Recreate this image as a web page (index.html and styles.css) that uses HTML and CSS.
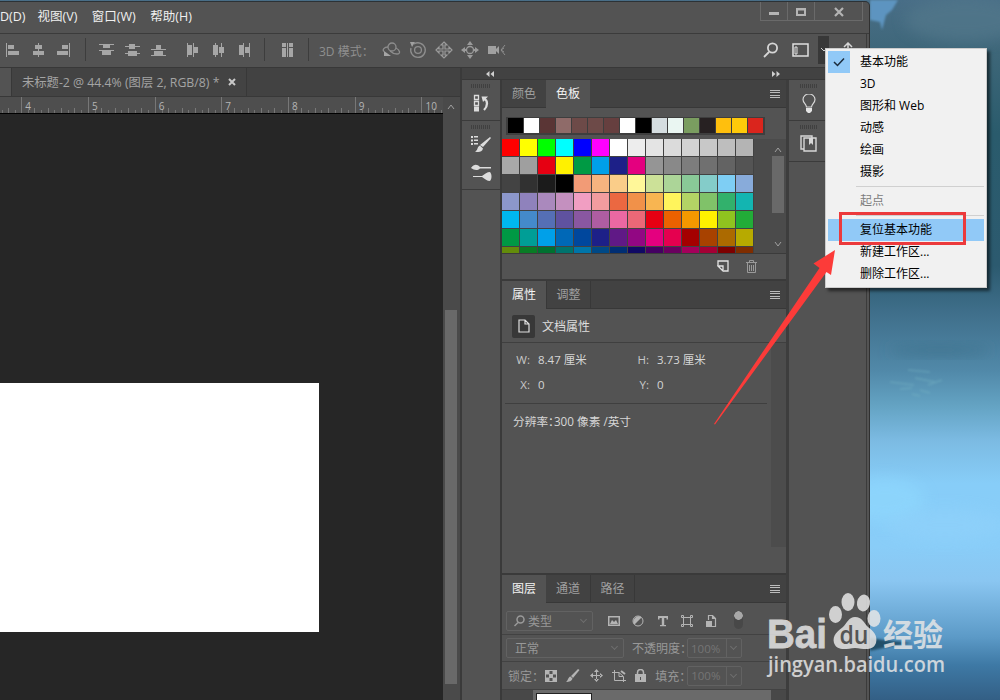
FILE: index.html
```html
<!DOCTYPE html>
<html lang="zh-CN">
<head>
    <meta charset="UTF-8">
    <meta name="viewport" content="width=device-width, initial-scale=1.0">
    <title>未标题-2</title>
    <link rel="stylesheet" href="styles.css">
</head>
<body>
<div class="desktop">
    <svg class="wallpaper" width="130" height="700">
        <defs>
            <filter id="soft" x="-50%" y="-50%" width="200%" height="200%"><feGaussianBlur stdDeviation="7"/></filter>
            <filter id="slight" x="-50%" y="-50%" width="200%" height="200%"><feGaussianBlur stdDeviation="1"/></filter>
        </defs>
        <path d="M0 0H28L22 10 16 15 12 30 10 22 0 20Z" fill="#5d94c0" filter="url(#slight)"/>
        <ellipse cx="95" cy="20" rx="60" ry="22" fill="#53788b" filter="url(#soft)" opacity=".7"/>
        <ellipse cx="70" cy="350" rx="50" ry="5" fill="#3f7590" filter="url(#soft)"/>
        <g stroke="#79b6c4" stroke-width="1.5" opacity=".45" filter="url(#slight)">
            <path d="M38 370l22 2M20 382l24 3M45 378l20 4M50 390l10 3M30 389l12-1M58 385l14-5M42 394l8 2"/>
        </g>
        <ellipse cx="15" cy="500" rx="40" ry="22" fill="#91dbff" filter="url(#soft)" opacity=".5"/>
        <ellipse cx="75" cy="525" rx="60" ry="16" fill="#90d2fb" filter="url(#soft)" opacity=".6"/>
        <path d="M0 638l14 2 28 3-20 3-22 5Z" fill="#245069" filter="url(#slight)"/>
    </svg>

    <div class="window">
        <div class="menubar">
            <span class="menu-item">D(D)</span>
            <span class="menu-item">视图(V)</span>
            <span class="menu-item">窗口(W)</span>
            <span class="menu-item">帮助(H)</span>
            <div class="window-buttons">
                <span><svg width="12" height="10"><path d="M1 5h10v3H1z"/></svg></span>
                <span><svg width="12" height="10"><path d="M1 1h10v8H1zM3 3.500v3.500h6V3.500z" fill-rule="evenodd"/></svg></span>
                <span class="close"><svg width="12" height="10"><path d="M2 1l8 8M10 1L2 9" stroke="#b4b4b4" stroke-width="2.2"/></svg></span>
            </div>
        </div>

        <div class="options">
            <div class="tool-group">
                <svg width="16" height="16"><path d="M1 1h1v14H1zM3 3h6v4H3zM3 9h11v4H3z"/></svg>
                <svg width="16" height="16"><path d="M7 1h1v14H7zM4 3h7v4H4zM2 9h11v4H2z"/></svg>
                <svg width="16" height="16"><path d="M12 1h1v14h-1zM5 3h6v4H5zM0 9h11v4H0z"/></svg>
            </div>
            <i class="sep"></i>
            <div class="tool-group">
                <svg width="16" height="16"><path d="M1 2h15v1H1zM1 8h15v1H1zM5 3h7v3H5zM4 9h9v4H4z"/></svg>
                <svg width="16" height="16"><path d="M1 4h15v1H1zM1 11h15v1H1zM5 2h6v5H5zM4 9h9v5H4z"/></svg>
                <svg width="16" height="16"><path d="M1 7h15v1H1zM1 13h15v1H1zM6 3h5v4H6zM4 9h9v4H4z"/></svg>
            </div>
            <div class="tool-group second">
                <svg width="16" height="16"><path d="M3 1h1v14H3zM9 1h1v14H9zM4 3h4v10H4zM10 5h4v6h-4z"/></svg>
                <svg width="16" height="16"><path d="M5 1h1v14H5zM11 1h1v14h-1zM3 3h5v10H3zM9 5h5v6H9z"/></svg>
                <svg width="16" height="16"><path d="M7 1h1v14H7zM13 1h1v14h-1zM3 3h4v10H3zM9 5h4v6H9z"/></svg>
            </div>
            <i class="sep"></i>
            <svg class="distribute" width="16" height="16"><path d="M3 1h4v4H3zM3 6h4v9H3zM8 1h1v14H8zM10 1h4v4h-4zM10 6h4v9h-4z"/></svg>
            <i class="sep"></i>
            <span class="mode-label">3D 模式：</span>
            <div class="tool-group mode">
                <svg width="20" height="16" fill="none" stroke="#8d8d8d" stroke-width="1.3"><circle cx="11" cy="5" r="4"/><path d="M7 5C3 5 1 8 3 9.500M15 6c4 2 5 6 1 6-3 0-5-1-7-3"/><path d="M3 9l7 5H3z" fill="#a5a5a5" stroke="none"/></svg>
                <svg width="18" height="18" fill="none" stroke="#8d8d8d" stroke-width="1.3"><circle cx="9" cy="9" r="3.4"/><path d="M5 3a7.300 7.300 0 1 1-3 4"/><path d="M1 1h5L3 6z" fill="#a0a0a0" stroke="none"/></svg>
                <svg width="18" height="18" fill="none" stroke="#9b9b9b" stroke-width="1.2"><path d="M9 1l3 3h-2v4h4V6l3 3-3 3v-2h-4v4h2l-3 3-3-3h2v-4H4v2L1 9l3-3v2h4V4H6z"/></svg>
                <svg width="18" height="18" fill="#9b9b9b"><circle cx="9" cy="9" r="3.500" fill="none" stroke="#9b9b9b" stroke-width="1.300"/><path d="M9 0l3 4H6zM9 18l3-4H6zM0 9l4-3v2h2v2H4v2zM18 9l-4-3v2h-2v2h2v2z"/></svg>
                <svg width="20" height="16" fill="#a0a0a0"><path d="M1 4h8v8H1zM8 8l4-4v8z"/><path d="M18 3l-4 5 4 5M17 6l-3 2 3 2" fill="none" stroke="#8d8d8d"/></svg>
            </div>
            <div class="right-tools">
                <svg width="16" height="16" fill="none" stroke="#d6d6d6" stroke-width="1.800"><circle cx="9.500" cy="6" r="4.600"/><path d="M6 10l-5 5"/></svg>
                <svg width="17" height="14" fill="none" stroke="#e0e0e0" stroke-width="1.500"><path d="M1 1h15v12H1z"/><path d="M3 4h2v7H3z" stroke-width="1"/></svg>
                <span class="workspace-btn"><svg width="8" height="6" fill="none" stroke="#d0d0d0"><path d="M1 1l3 3 3-3"/></svg></span>
                <svg class="share" width="16" height="16" fill="none" stroke="#d6d6d6" stroke-width="1.500"><path d="M8 1v11M4 5l4-4 4 4M1 7h4M11 7h4"/></svg>
            </div>
        </div>

        <div class="main">
            <div class="document">
                <div class="doc-tabs">
                    <div class="doc-tab-prev"></div>
                    <div class="doc-tab">未标题-2 @ 44.4% (图层 2, RGB/8) *<svg width="8" height="8"><path d="M1 1l6 6M7 1L1 7" stroke="#c8c8c8" stroke-width="2"/></svg></div>
                </div>
                <div class="doc-body">
                    <div class="canvas-side">
                        <div class="ruler"><b></b><b>4</b><b>5</b><b>6</b><b>7</b><b>8</b><b>9</b><b>10</b></div>
                        <div class="canvas"><div class="artboard"></div></div>
                    </div>
                    <div class="doc-scroll">
                        <svg width="8" height="6" fill="none" stroke="#a0a0a0"><path d="M1 5l3-4 3 4"/></svg>
                        <div class="doc-thumb"></div>
                    </div>
                </div>
            </div>

            <div class="dock">
                <div class="dock-head">
                    <svg width="8" height="6" fill="#cfcfcf"><path d="M3.500 0v6L0 3zM8 0v6L4.500 3z"/></svg>
                    <svg width="8" height="6" fill="#cfcfcf"><path d="M0 0v6l3.500-3zM4.500 0v6L8 3z"/></svg>
                </div>
                <div class="dock-cols">
                    <div class="icon-col">
                        <div class="icon-group">
                            <i class="grip"></i>
                            <svg width="16" height="18" fill="none" stroke="#dcdcdc" stroke-width="1.300"><path d="M1.500 1.500h4v4h-4zM1.500 7.500h4v4h-4z"/><path d="M1 12.500h5v5H1z" fill="#dcdcdc" stroke="none"/><path d="M11 5c4 1 4 7 0 11" stroke-width="2.300"/><path d="M8.500 2.500H15L10 8z" fill="#dcdcdc" stroke="none"/></svg>
                        </div>
                        <div class="icon-group tall">
                            <i class="grip"></i>
                            <svg width="22" height="19" fill="#dcdcdc"><path d="M1 1h2v2H1zM4 1h4v1.500H4zM1 4.500h2v2H1zM4 4.500h4V6H4zM1 8h2v2H1zM4 8h4v1.500H4z"/><path d="M20 2l1 1-8 9-3-2zM10 10.500l3 3c-1 4-5 4-8 3 3-1 2-5 5-6z"/></svg>
                            <svg class="second-icon" width="22" height="18" fill="#dcdcdc"><path d="M1 4c3-4 6-4 9-1h11v1.500H10C7 7 4 6 1 4zM3 12h9c3-2 5-4 8-4 2 2 2 7 0 9-3 0-5-2-8-4H3z"/></svg>
                        </div>
                    </div>

                    <div class="panels">
                        <div class="panel swatches-panel">
                            <div class="tabs"><span>颜色</span><span class="active">色板</span><i class="flyout"></i></div>
                            <div class="recent" id="recent"></div>
                            <div class="swatch-area">
                                <div class="swatch-grid" id="swatches"></div>
                                <div class="swatch-scroll">
                                    <svg width="8" height="6" fill="none" stroke="#a0a0a0"><path d="M1 5l3-4 3 4"/></svg>
                                    <div class="swatch-thumb"></div>
                                    <svg width="8" height="6" fill="none" stroke="#a0a0a0"><path d="M1 1l3 4 3-4"/></svg>
                                </div>
                            </div>
                            <div class="panel-foot">
                                <svg width="12" height="12" fill="none" stroke="#e4e4e4" stroke-width="1.300"><path d="M1 5.500V1h10v10H6.500"/><path d="M1 6h5v5z"/></svg>
                                <svg width="11" height="13" fill="none" stroke="#9a9a9a"><path d="M0 2.500h11M3.500 2V.5h4V2M1.500 3v9.500h8V3M3.500 5v6M5.500 5v6M7.500 5v6"/></svg>
                            </div>
                        </div>

                        <div class="panel props-panel">
                            <div class="tabs"><span class="active">属性</span><span class="last">调整</span><i class="flyout"></i></div>
                            <div class="props-head">
                                <span class="doc-icon"><svg width="12" height="14" fill="none" stroke="#e0e0e0" stroke-width="1.200"><path d="M1 1h6l4 4v8H1zM7 1v4h4"/></svg></span>
                                文档属性
                            </div>
                            <div class="props-body">
                                <div class="props-grid">
                                    <label>W:</label><span>8.47 厘米</span><label>H:</label><span>3.73 厘米</span>
                                    <label>X:</label><span>0</span><label>Y:</label><span>0</span>
                                </div>
                                <div class="resolution">分辨率：300 像素 /英寸</div>
                            </div>
                        </div>

                        <div class="panel layers-panel">
                            <div class="tabs"><span class="active">图层</span><span>通道</span><span class="last">路径</span><i class="flyout"></i></div>
                            <div class="layer-row filter-row">
                                <div class="select kind">
                                    <svg width="11" height="12" fill="none" stroke="#9a9a9a" stroke-width="1.500"><circle cx="6.500" cy="4.500" r="3.500"/><path d="M4 7.500L.5 11"/></svg>
                                    类型
                                    <i class="caret"></i>
                                </div>
                                <div class="filter-icons">
                                    <svg width="12" height="12"><path d="M0 1h12v10H0zM1.500 2.500v7h9v-7z" fill-rule="evenodd"/><path d="M2 9l2-4 2 2 2-2 2 4z"/></svg>
                                    <svg width="12" height="12"><circle cx="6" cy="6" r="5" fill="none" stroke="#b4b4b4"/><path d="M9.500 2.500A5 5 0 0 0 2.500 9.500z"/></svg>
                                    <svg width="12" height="12"><path d="M1 1h10v3.500H9.500V3H7.200v7H9v1.200H3V10h1.800V3H2.500v1.500H1z"/></svg>
                                    <svg width="12" height="12" fill="none" stroke="#b4b4b4"><path d="M2.500 2.500h7v7h-7z"/><path d="M.5.5h2v2h-2zM9.500.5h2v2h-2zM.5 9.500h2v2h-2zM9.500 9.500h2v2h-2z"/></svg>
                                    <svg width="12" height="12"><path d="M3.500 5V.5h4l3 3v8H7M7.500.5v3h3" fill="none" stroke="#b4b4b4" stroke-width="1.200"/><path d="M1 6h6v6H1z"/></svg>
                                </div>
                                <i class="toggle"></i>
                            </div>
                            <div class="layer-row blend-row">
                                <div class="select blend">正常<i class="caret"></i></div>
                                <span class="row-label">不透明度：</span>
                                <div class="select percent">100%<i class="caret"></i></div>
                            </div>
                            <div class="layer-row lock-row">
                                <span class="row-label">锁定：</span>
                                <div class="lock-icons">
                                    <svg width="12" height="12"><path d="M0 0h12v12H0zM4.500 1v3h3V1zM1 4.500v3h3v-3zM8 4.500v3h3v-3zM4.500 8v3h3V8z" fill-rule="evenodd"/></svg>
                                    <svg width="14" height="13"><path d="M12 0l1.500 1L7 9 5 7zM4.500 7.500l2 2C6 12 3 13 0 13c2-1 2-5 4.500-5.500z"/></svg>
                                    <svg width="13" height="13"><path d="M6 2h1v9H6zM2 6h9v1H2zM6.500 0L9 3H4zM6.500 13L9 10H4zM0 6.500L3 4v5zM13 6.500L10 4v5z"/></svg>
                                    <svg width="14" height="12" fill="none" stroke="#b4b4b4"><path d="M2.500 0v10.500H14M0 2.500h7l4.500 4V12M7 2.500v4h4"/><path d="M9 1l4 3" stroke-width="2"/></svg>
                                    <svg width="11" height="13"><path d="M0 5h11v8H0z"/><path d="M2.500 5V3.500a3 3 0 0 1 6 0V5" fill="none" stroke="#b4b4b4" stroke-width="1.500"/><path d="M5 8h1v3H5z" fill="#535353"/></svg>
                                </div>
                                <span class="row-label fill-label">填充：</span>
                                <div class="select percent">100%<i class="caret"></i></div>
                            </div>
                            <div class="layer-list"><div class="layer"><div class="layer-thumb"></div></div></div>
                        </div>
                    </div>

                    <div class="side-col">
                        <div class="icon-group">
                            <i class="grip"></i>
                            <svg width="14" height="20"><path d="M4.500 13c0-3-3.500-4-3.500-7.500a6 5.500 0 0 1 12 0C13 9 9.500 10 9.500 13z" fill="none" stroke="#d8d8d8" stroke-width="1.200"/><path d="M4 14h6v3l-2 2H6l-2-2z" fill="#e4e4e4"/></svg>
                        </div>
                        <div class="icon-group">
                            <i class="grip"></i>
                            <svg width="17" height="17" fill="none" stroke="#d8d8d8" stroke-width="1.400"><path d="M4 3h12v13H4zM4 14H1V1h11v2"/><path d="M9 3h4v7l-2-2-2 2z" fill="#d8d8d8" stroke="none"/></svg>
                        </div>
                    </div>
                </div>
            </div>
        </div>
    </div>

    <!-- workspace menu -->
    <div class="popup">
        <div class="popup-item checked">基本功能</div>
        <div class="popup-item">3D</div>
        <div class="popup-item">图形和 Web</div>
        <div class="popup-item">动感</div>
        <div class="popup-item">绘画</div>
        <div class="popup-item">摄影</div>
        <hr>
        <div class="popup-item disabled">起点</div>
        <hr>
        <div class="popup-item hover">复位基本功能</div>
        <div class="popup-item">新建工作区...</div>
        <div class="popup-item">删除工作区...</div>
        <svg class="check" width="22" height="22" fill="none" stroke="#1c2c3c" stroke-width="1.500"><path d="M6 11l3.500 3.500L16 7.500"/></svg>
    </div>

    <!-- annotation -->
    <div class="red-box"></div>
    <svg class="arrow" width="130" height="185"><path d="M4 184L109.500 28 103.500 23.500 125 10 121 35 116.500 32 5 184.500Z" fill="#fc3b39"/></svg>

    <!-- watermark -->
    <svg class="watermark" width="190" height="92">
        <g fill="#e6e6e6" fill-opacity=".85">
            <text x="2" y="58" class="wm-bai" textLength="60" lengthAdjust="spacingAndGlyphs">Bai</text>
            <ellipse cx="70.500" cy="24.500" rx="6.500" ry="8.500"/>
            <ellipse cx="83" cy="12" rx="6.500" ry="9"/>
            <ellipse cx="98.500" cy="13" rx="6.500" ry="8.500" transform="rotate(10 98.500 13)"/>
            <ellipse cx="109" cy="28.500" rx="6.500" ry="8.500"/>
            <path d="M90 27c7 0 9 6 13 10 5 4 10 8 8 16-3 8-11 6-21 5-10 1-18 3-21-5-2-8 4-12 9-16 4-4 6-10 12-10z"/>
            <text x="118" y="56" class="wm-cn" textLength="60" lengthAdjust="spacingAndGlyphs">经验</text>
            <text x="3" y="82" class="wm-url" textLength="177" lengthAdjust="spacingAndGlyphs">jingyan.baidu.com</text>
        </g>
        <text x="74.500" y="54" class="wm-du" textLength="29" lengthAdjust="spacingAndGlyphs">du</text>
    </svg>
</div>

<script>
    const recent = ['000', 'fff', '5a3535', '8f6b69', '6d4a48', '6d4a48', '663f3f', 'fff', '000', 'd5dde0', 'eaf6f2', '7a9d60', '272122', 'ffbf0d', 'ffca0a', 'da251d'];

    const swatches = [
        'f00 ff0 0f0 0ff 00f f0f fff ededed e4e4e4 dbdbdb d2d2d2 c8c8c8 bebebe b4b4b4',
        'a9a9a9 9f9f9f e60012 fff100 009a44 00a0e9 1d2088 e4007f 959595 898989 7d7d7d 707070 636363 545454',
        '434343 313131 1b1b1b 000 f29b76 f6b37f facd89 fff799 cce198 acd598 89c997 84ccc9 7ecef4 88abda',
        '8c97cb 8f82bc aa89bd c490bf f19ec2 f29c9f eb6841 f19149 f8b551 fff45c b3d465 80c269 32b16c 13b5b1',
        '00b7ee 448aca 556fb5 5f52a0 8957a1 ae5da1 ea68a2 eb6877 e60012 eb6100 f39800 fff100 8fc31f 22ac38',
        '009944 009e96 00a0e9 0068b7 00479d 1d2088 601986 920783 e4007f e5004f a40000 a84200 ac6a00 b7aa00',
        '638c0b 097c25 007130 00736d 0075a9 004986 002e73 100964 440062 6a005f a4005b a40035 7d0000 7f2d00'
    ].join(' ').split(' ');

    function fill(id, colors) {
        document.getElementById(id).innerHTML = colors.map(c => `<i style="background:#${c}"></i>`).join('');
    }

    fill('recent', recent);
    fill('swatches', swatches);
</script>
</body>
</html>
```

FILE: styles.css
```css
* {
    box-sizing: border-box;
}
body {
    margin: 0;
    font-family: "Open Sans", "Noto Sans CJK SC", sans-serif;
    font-size: 12px;
    color: #d6d6d6;
}
svg {
    display: block;
    flex: none;
}
.desktop {
    position: relative;
    width: 1000px;
    height: 700px;
    padding-top: 1px;
    overflow: hidden;
    background: linear-gradient(#496e87 0, #3d6678 8%, #2a5b6c 19%, #2c5a6f 38%, #40708c 45%, #5189a9 53%, #64a3c3 58%, #7cbbe3 63%, #87cdf8 69%, #89cdf8 78%, #8ac6f1 83%, #5c9ac7 91%, #3e79a5 95%, #335f85 100%);
}
.wallpaper {
    position: absolute;
    left: 870px;
    top: 0;
}

/* window */
.window {
    position: relative;
    display: flex;
    flex-direction: column;
    width: 870px;
    height: 699px;
    background: #535353;
    border-top: 1px solid #2c3236;
    border-right: 1px solid #303030;
    border-top-right-radius: 5px;
    overflow: hidden;
}
.menubar {
    display: flex;
    flex: none;
    height: 32px;
    border-bottom: 1px solid #3b3b3b;
    line-height: 29px;
    font-size: 12.500px;
    color: #f0f0f0;
}
.menu-item {
    margin-right: 14.500px;
    white-space: nowrap;
}
.menu-item:first-child {
    width: 23px;
}
.window-buttons {
    display: flex;
    height: 19px;
    margin: 0 6px 0 auto;
    border: 1px solid #6a6a6a;
    border-top: 0;
}
.window-buttons span {
    display: flex;
    align-items: center;
    justify-content: center;
    width: 27px;
    padding-top: 1px;
    border-right: 1px solid #6a6a6a;
}
.window-buttons svg {
    fill: #b4b4b4;
}
.window-buttons .close {
    width: 47px;
    border: 0;
}
.options {
    display: flex;
    flex: none;
    align-items: center;
    height: 34px;
    margin-right: 2px;
    padding: 0 0 2px 5px;
    border-right: 1px solid #3b3b3b;
    border-bottom: 1px solid #383838;
}
.options svg:not([fill]) {
    fill: #a6a6a6;
}
.tool-group {
    display: flex;
    align-items: center;
    gap: 10px;
}
.tool-group.second {
    margin-left: 18px;
}
.sep {
    width: 1px;
    height: 23px;
    margin: 0 12px;
    background: #3d3d3d;
}
.distribute {
    margin: 0 1px 0 2px;
}
.mode-label {
    width: 62px;
    margin-left: -2px;
    padding-top: 2px;
    color: #8f8f8f;
    white-space: nowrap;
}
.mode {
    gap: 8px;
}
.right-tools {
    display: flex;
    align-items: center;
    margin: 0 10px 0 auto;
}
.right-tools svg + svg {
    margin: 0 9px 0 13px;
}
.workspace-btn {
    display: flex;
    align-items: center;
    justify-content: center;
    width: 11px;
    height: 28px;
    background: #383838;
    margin-right: 11px;
}
.right-tools .share {
    margin: 0;
}
.main {
    display: flex;
    flex: 1;
    min-height: 0;
}

/* document */
.document {
    display: flex;
    flex-direction: column;
    width: 460px;
}
.doc-tabs {
    display: flex;
    flex: none;
    height: 29px;
    background: #424242;
    border-bottom: 1px solid #383838;
}
.doc-tab-prev {
    width: 12px;
    background: #535353;
    border-right: 1px solid #383838;
}
.doc-tab {
    display: flex;
    align-items: center;
    width: 235px;
    padding-left: 10px;
    border-right: 1px solid #383838;
    background: #434343;
    color: #a4a4a4;
    font-size: 12.3px;
    white-space: nowrap;
}
.doc-tab svg {
    margin-left: 9px;
}
.doc-body {
    display: flex;
    flex: 1;
}
.canvas-side {
    width: 443px;
    overflow: hidden;
}
.ruler {
    display: flex;
    height: 17px;
    padding-left: 21.300px;
    overflow: hidden;
    background: #4e4e4e;
    border-bottom: 1px solid #000;
}
.ruler b {
    flex: none;
    width: 66.700px;
    padding-left: 3px;
    border-left: 1px solid #777;
    font-weight: normal;
    font-size: 10px;
    line-height: 18px;
    color: #b5b5b5;
    background:
        repeating-linear-gradient(90deg, transparent 0 12.300px, #777 12.300px 13.340px) 0 100% / 100% 5px no-repeat,
        repeating-linear-gradient(90deg, transparent 0 5.670px, #727272 5.670px 6.670px) 0 100% / 100% 3px no-repeat;
}
.ruler b:first-child {
    margin-left: -66.700px;
}
.canvas {
    height: 586px;
    padding-top: 269px;
    background: #262626;
}
.artboard {
    width: 319px;
    height: 249px;
    background: #fff;
}
.doc-scroll {
    width: 17px;
    padding: 7px 3px 0 2px;
    background: #4a4a4a;
}
.doc-scroll svg {
    margin-left: 2px;
}
.doc-thumb {
    height: 374px;
    margin-top: 200px;
    background: #696969;
}

/* dock */
.dock {
    display: flex;
    flex-direction: column;
    width: 409px;
    border-left: 2px solid #3a3a3a;
}
.dock-head {
    display: flex;
    flex: none;
    align-items: center;
    height: 12px;
    margin-right: 2px;
    padding: 0 87px 0 24px;
    justify-content: space-between;
    background: #424242;
    border-bottom: 1px solid #383838;
}
.dock-cols {
    display: flex;
    flex: 1;
    min-height: 0;
}
.icon-col {
    width: 38px;
}
.icon-group {
    display: flex;
    flex-direction: column;
    align-items: center;
    height: 41px;
    border-bottom: 1px solid #3b3b3b;
}
.icon-group.tall {
    height: 69px;
}
.grip {
    width: 20px;
    height: 4px;
    margin: 4px 0 6px;
    background: repeating-linear-gradient(90deg, #404040 0 1px, transparent 1px 2px);
}
.second-icon {
    margin-top: 10px;
}
.panels {
    display: flex;
    flex-direction: column;
    width: 289px;
    border-left: 2px solid #3a3a3a;
    border-right: 3px solid #3d3d3d;
}
.side-col {
    width: 78px;
    border-right: 1px solid #3b3b3b;
}
.side-col .icon-group {
    padding-right: 38px;
}
.side-col .grip {
    width: 18px;
}
.panel {
    flex: none;
    border-bottom: 2px solid #3a3a3a;
    background: #535353;
}
.tabs {
    display: flex;
    height: 28px;
    padding-right: 6px;
    background: #424242;
    border-bottom: 1px solid #383838;
    line-height: 27px;
    color: #a0a0a0;
}
.tabs span {
    width: 44px;
    text-align: center;
}
.tabs span.active {
    height: 28px;
    background: #535353;
    color: #f2f2f2;
}
.tabs span.last {
    width: 45px;
    border-right: 1px solid #383838;
}
.tabs span + .last {
    border-left: 1px solid #383838;
}
.flyout {
    width: 10px;
    height: 8px;
    margin: 10px 0 0 auto;
    background: repeating-linear-gradient(#bcbcbc 0 1px, transparent 1px 2.330px);
}

/* swatches */
.swatches-panel {
    height: 201px;
}
.recent {
    display: flex;
    gap: 1px;
    width: 259px;
    height: 18px;
    margin: 9px 0 0 4px;
    padding: 1px 2px;
    background: #3e3e3e;
}
.recent i {
    width: 15px;
    height: 15px;
}
.swatch-area {
    display: flex;
    height: 115px;
    margin-top: 4px;
    border-bottom: 1px solid #3b3b3b;
    background: #4b4b4b;
    overflow: hidden;
}
.swatch-grid {
    display: grid;
    grid-template-columns: repeat(14, 17px);
    grid-auto-rows: 17px;
    gap: 1px;
    width: 252px;
    height: 126px;
    background: #424242;
}
.swatch-scroll {
    display: flex;
    flex-direction: column;
    align-items: center;
    width: 14px;
    height: 115px;
    margin-left: 17px;
    padding: 8px 0 7px;
}
.swatch-thumb {
    width: 12px;
    height: 57px;
    margin: 3px 0 auto;
    background: #696969;
}
.panel-foot {
    display: flex;
    gap: 17px;
    align-items: center;
    justify-content: flex-end;
    height: 25px;
    padding: 0 29px 1px 0;
}

/* properties */
.props-panel {
    height: 294px;
}
.props-head {
    display: flex;
    align-items: center;
    gap: 7px;
    height: 34px;
    padding: 1px 0 0 10px;
    border-bottom: 1px solid #3f3f3f;
    color: #dedede;
}
.doc-icon {
    display: flex;
    align-items: center;
    justify-content: center;
    width: 23px;
    height: 23px;
    border-radius: 2px;
    background: #383838;
}
.props-body {
    width: 284px;
    height: 204px;
    padding-left: 3px;
    border-right: 15px solid #4c4c4c;
}
.props-grid {
    display: grid;
    grid-template-columns: 25px 76px 27px 1fr;
    grid-auto-rows: 25px;
    column-gap: 8px;
    width: 262px;
    height: 61px;
    padding-top: 4px;
    border-bottom: 1px solid #3f3f3f;
    line-height: 25px;
    font-size: 11.500px;
}
.props-grid label {
    text-align: right;
    color: #c8c8c8;
}
.resolution {
    padding: 8px 0 0 8px;
    color: #d6d6d6;
    font-size: 11.700px;
    white-space: nowrap;
    font-feature-settings: "halt";
}

/* layers */
.layers-panel {
    flex: 1;
    border: 0;
}
.layer-row {
    display: flex;
    align-items: center;
    border-bottom: 1px solid #424242;
    color: #989898;
}
.filter-row {
    height: 32px;
    padding: 4px 0 0 4px;
}
.blend-row {
    height: 27px;
    padding-left: 4px;
}
.lock-row {
    height: 28px;
    padding-left: 6px;
}
.select {
    display: flex;
    align-items: center;
    height: 20px;
    border: 1px solid #626262;
    border-radius: 2px;
    padding-left: 8px;
    white-space: nowrap;
}
.caret {
    width: 5px;
    height: 5px;
    margin: -3px 6px 0 auto;
    border: solid #6e6e6e;
    border-width: 0 1px 1px 0;
    transform: rotate(45deg);
}
.kind {
    width: 87px;
    gap: 3px;
    padding-left: 7px;
}
.blend {
    width: 118px;
}
.percent {
    width: 55px;
    padding-left: 3px;
    color: #757575;
    font-size: 11.500px;
    background: linear-gradient(90deg, transparent 38px, #626262 38px 39px, transparent 39px);
}
.percent .caret {
    margin-right: 5px;
}
.filter-icons {
    display: flex;
    gap: 12.300px;
    margin-left: 15px;
}
.filter-icons svg:not([fill]),
.lock-icons svg:not([fill]) {
    fill: #b4b4b4;
}
.toggle {
    width: 9px;
    height: 18px;
    margin: -2px 0 0 17px;
    border-radius: 5px;
    background: radial-gradient(circle at 4.500px 4.500px, #a8a8a8 4px, #484848 4.600px);
}
.row-label {
    width: 55px;
    margin-left: 8px;
    white-space: nowrap;
}
.lock-row .row-label {
    width: 37px;
    margin-left: 0;
}
.lock-icons {
    display: flex;
    align-items: center;
    gap: 9.300px;
}
.lock-row .fill-label {
    width: 32px;
    margin-left: 9px;
}
.layer-list {
    height: 10px;
    padding-left: 31px;
    background: #484848;
}
.layer {
    width: 238px;
    height: 10px;
    padding: 3px 0 0 3px;
    background: #6a6a6a;
}
.layer-thumb {
    width: 56px;
    height: 7px;
    border: 1px solid #222;
    border-bottom: 0;
    background: #fff;
}

/* workspace popup */
.popup {
    position: absolute;
    left: 825px;
    top: 48px;
    width: 162px;
    height: 240px;
    padding: 2px;
    border: 1px solid #ccc;
    background: #f1f1f1;
    box-shadow: 3px 3px 3px rgba(0, 0, 0, 0.55);
    color: #000;
    font-size: 12px;
}
.popup-item {
    height: 22px;
    padding-left: 32px;
    line-height: 21px;
}
.popup-item.disabled {
    color: #7c7c7c;
}
.popup-item.hover {
    background: #91c9f7;
}
.popup hr {
    height: 1px;
    margin: 3px 0 3px 28px;
    border: 0;
    background: #d0d0d0;
}
.check {
    position: absolute;
    left: 2px;
    top: 2px;
    background: #91c9f7;
}
.red-box {
    position: absolute;
    left: 839px;
    top: 212px;
    width: 127px;
    height: 33px;
    border: 3px solid #ec3a3c;
}
.arrow {
    position: absolute;
    left: 710px;
    top: 240px;
}

/* watermark */
.watermark {
    position: absolute;
    left: 765px;
    top: 590px;
}
.wm-bai {
    font: bold 41px "Liberation Sans", sans-serif;
    stroke: #cfcfcf;
    stroke-width: 0.8px;
}
.wm-du {
    font: 600 26px "Open Sans", sans-serif;
    fill: #555;
}
.wm-cn {
    font: bold 31px "Noto Sans CJK SC", sans-serif;
}
.wm-url {
    font: 600 21px "Open Sans", sans-serif;
}
```
